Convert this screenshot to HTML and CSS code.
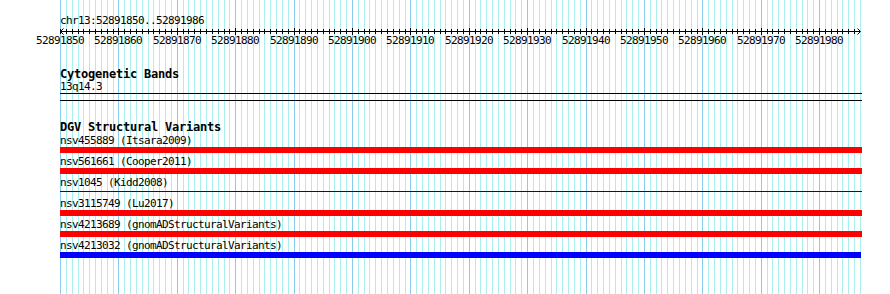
FILE: index.html
```html
<!DOCTYPE html>
<html>
<head>
<meta charset="utf-8">
<title>Genome view</title>
<link rel="stylesheet" href="styles.css">
</head>
<body>
<div class="view">
  <svg class="grid" width="890" height="294" viewBox="0 0 890 294">
    <path class="grid-minor" d="M66.5 0v294M72.5 0v294M78.5 0v294M83.5 0v294M89.5 0v294M95.5 0v294M101.5 0v294M107.5 0v294M113.5 0v294M124.5 0v294M130.5 0v294M136.5 0v294M142.5 0v294M148.5 0v294M153.5 0v294M159.5 0v294M165.5 0v294M171.5 0v294M183.5 0v294M188.5 0v294M194.5 0v294M200.5 0v294M206.5 0v294M212.5 0v294M218.5 0v294M224.5 0v294M229.5 0v294M241.5 0v294M247.5 0v294M253.5 0v294M259.5 0v294M264.5 0v294M270.5 0v294M276.5 0v294M282.5 0v294M288.5 0v294M299.5 0v294M305.5 0v294M311.5 0v294M317.5 0v294M323.5 0v294M329.5 0v294M334.5 0v294M340.5 0v294M346.5 0v294M358.5 0v294M364.5 0v294M369.5 0v294M375.5 0v294M381.5 0v294M387.5 0v294M393.5 0v294M399.5 0v294M405.5 0v294M416.5 0v294M422.5 0v294M428.5 0v294M434.5 0v294M440.5 0v294M445.5 0v294M451.5 0v294M457.5 0v294M463.5 0v294M475.5 0v294M480.5 0v294M486.5 0v294M492.5 0v294M498.5 0v294M504.5 0v294M510.5 0v294M515.5 0v294M521.5 0v294M533.5 0v294M539.5 0v294M545.5 0v294M551.5 0v294M556.5 0v294M562.5 0v294M568.5 0v294M574.5 0v294M580.5 0v294M591.5 0v294M597.5 0v294M603.5 0v294M609.5 0v294M615.5 0v294M621.5 0v294M626.5 0v294M632.5 0v294M638.5 0v294M650.5 0v294M656.5 0v294M661.5 0v294M667.5 0v294M673.5 0v294M679.5 0v294M685.5 0v294M691.5 0v294M697.5 0v294M708.5 0v294M714.5 0v294M720.5 0v294M726.5 0v294M732.5 0v294M737.5 0v294M743.5 0v294M749.5 0v294M755.5 0v294M767.5 0v294M772.5 0v294M778.5 0v294M784.5 0v294M790.5 0v294M796.5 0v294M802.5 0v294M807.5 0v294M813.5 0v294M825.5 0v294M831.5 0v294M837.5 0v294M842.5 0v294M848.5 0v294M854.5 0v294M860.5 0v294"/>
    <path class="grid-major" d="M60.5 0v294M118.5 0v294M177.5 0v294M235.5 0v294M294.5 0v294M352.5 0v294M410.5 0v294M469.5 0v294M527.5 0v294M586.5 0v294M644.5 0v294M702.5 0v294M761.5 0v294M819.5 0v294"/>
  </svg>

  <div class="location">chr13:52891850..52891986</div>

  <svg class="ruler" width="890" height="21" viewBox="0 0 890 21">
    <path class="ruler-line" d="M60 4.5H860"/>
    <path class="ruler-line" d="M60.5 2v5M66.5 2v5M72.5 2v5M78.5 2v5M83.5 2v5M89.5 2v5M95.5 2v5M101.5 2v5M107.5 2v5M113.5 2v5M118.5 1v7M124.5 2v5M130.5 2v5M136.5 2v5M142.5 2v5M148.5 2v5M153.5 2v5M159.5 2v5M165.5 2v5M171.5 2v5M177.5 1v7M183.5 2v5M188.5 2v5M194.5 2v5M200.5 2v5M206.5 2v5M212.5 2v5M218.5 2v5M224.5 2v5M229.5 2v5M235.5 1v7M241.5 2v5M247.5 2v5M253.5 2v5M259.5 2v5M264.5 2v5M270.5 2v5M276.5 2v5M282.5 2v5M288.5 2v5M294.5 1v7M299.5 2v5M305.5 2v5M311.5 2v5M317.5 2v5M323.5 2v5M329.5 2v5M334.5 2v5M340.5 2v5M346.5 2v5M352.5 1v7M358.5 2v5M364.5 2v5M369.5 2v5M375.5 2v5M381.5 2v5M387.5 2v5M393.5 2v5M399.5 2v5M405.5 2v5M410.5 1v7M416.5 2v5M422.5 2v5M428.5 2v5M434.5 2v5M440.5 2v5M445.5 2v5M451.5 2v5M457.5 2v5M463.5 2v5M469.5 1v7M475.5 2v5M480.5 2v5M486.5 2v5M492.5 2v5M498.5 2v5M504.5 2v5M510.5 2v5M515.5 2v5M521.5 2v5M527.5 1v7M533.5 2v5M539.5 2v5M545.5 2v5M551.5 2v5M556.5 2v5M562.5 2v5M568.5 2v5M574.5 2v5M580.5 2v5M586.5 1v7M591.5 2v5M597.5 2v5M603.5 2v5M609.5 2v5M615.5 2v5M621.5 2v5M626.5 2v5M632.5 2v5M638.5 2v5M644.5 1v7M650.5 2v5M656.5 2v5M661.5 2v5M667.5 2v5M673.5 2v5M679.5 2v5M685.5 2v5M691.5 2v5M697.5 2v5M702.5 1v7M708.5 2v5M714.5 2v5M720.5 2v5M726.5 2v5M732.5 2v5M737.5 2v5M743.5 2v5M749.5 2v5M755.5 2v5M761.5 1v7M767.5 2v5M772.5 2v5M778.5 2v5M784.5 2v5M790.5 2v5M796.5 2v5M802.5 2v5M807.5 2v5M813.5 2v5M819.5 1v7M825.5 2v5M831.5 2v5M837.5 2v5M842.5 2v5M848.5 2v5M854.5 2v5"/>
    <path class="ruler-arrow" d="M63.5 1.5L60.5 4.5L63.5 7.5M857.5 1.5L860.5 4.5L857.5 7.5"/>
    <g class="ruler-labels">
      <text x="60" y="17">52891850</text>
      <text x="118" y="17">52891860</text>
      <text x="177" y="17">52891870</text>
      <text x="235" y="17">52891880</text>
      <text x="294" y="17">52891890</text>
      <text x="352" y="17">52891900</text>
      <text x="410" y="17">52891910</text>
      <text x="469" y="17">52891920</text>
      <text x="527" y="17">52891930</text>
      <text x="586" y="17">52891940</text>
      <text x="644" y="17">52891950</text>
      <text x="702" y="17">52891960</text>
      <text x="761" y="17">52891970</text>
      <text x="819" y="17">52891980</text>
    </g>
  </svg>

  <section class="track track-cyto">
    <div class="track-title">Cytogenetic Bands</div>
    <div class="feature-label label-tight">13q14.3</div>
    <div class="band"></div>
  </section>

  <section class="track track-dgv">
    <div class="track-title">DGV Structural Variants</div>
    <div class="features">
      <div class="feature">
        <div class="feature-label">nsv455889 (Itsara2009)</div>
        <div class="feature-bar bar-red"></div>
      </div>
      <div class="feature">
        <div class="feature-label">nsv561661 (Cooper2011)</div>
        <div class="feature-bar bar-red"></div>
      </div>
      <div class="feature">
        <div class="feature-label">nsv1045 (Kidd2008)</div>
        <div class="feature-bar bar-thin"></div>
      </div>
      <div class="feature">
        <div class="feature-label">nsv3115749 (Lu2017)</div>
        <div class="feature-bar bar-red"></div>
      </div>
      <div class="feature">
        <div class="feature-label">nsv4213689 (gnomADStructuralVariants)</div>
        <div class="feature-bar bar-red"></div>
      </div>
      <div class="feature">
        <div class="feature-label">nsv4213032 (gnomADStructuralVariants)</div>
        <div class="feature-bar bar-blue"></div>
      </div>
    </div>
  </section>
</div>
</body>
</html>
```

FILE: styles.css
```css
html, body {
  margin: 0;
  padding: 0;
  background: #ffffff;
}

body {
  font-family: "DejaVu Sans Mono", "Liberation Mono", monospace;
  font-size: 11px;
  letter-spacing: -0.62px;
  color: #000000;
}

.view {
  position: relative;
  width: 890px;
  height: 294px;
  overflow: hidden;
}

.grid {
  position: absolute;
  left: 0;
  top: 0;
  z-index: 0;
}

.grid-minor {
  stroke: #aaeeee;
  stroke-width: 1;
  fill: none;
}

.grid-major {
  stroke: #88ccee;
  stroke-width: 1;
  fill: none;
}

.location,
.ruler,
.track {
  position: relative;
  z-index: 1;
}

.location {
  padding: 15px 0 0 60px;
  height: 12px;
  line-height: 12px;
  white-space: nowrap;
}

.ruler {
  display: block;
}

.ruler-line {
  stroke: #000000;
  stroke-width: 1;
  fill: none;
  shape-rendering: crispEdges;
}

.ruler-arrow {
  stroke: #000000;
  stroke-width: 1;
  fill: none;
}

.ruler-labels text {
  font-family: "DejaVu Sans Mono", "Liberation Mono", monospace;
  font-size: 11px;
  letter-spacing: -0.62px;
  text-anchor: middle;
  fill: #000000;
}

.track {
  margin-left: 60px;
  width: 802px;
}

.track-cyto {
  margin-top: 20px;
}

.track-dgv {
  margin-top: 20px;
}

.track-title {
  font-weight: bold;
  font-size: 12px;
  letter-spacing: -0.22px;
  line-height: 13px;
  height: 13px;
  white-space: nowrap;
}

.feature-label {
  height: 12px;
  line-height: 12px;
  white-space: nowrap;
}

.label-tight {
  height: 11px;
  line-height: 11px;
}

.band {
  margin-top: 1px;
  height: 6px;
  border-top: 1px solid #000000;
  border-bottom: 1px solid #000000;
}

.features {
  margin-top: 1px;
  display: flex;
  flex-direction: column;
  gap: 3px;
}

.feature-bar {
  height: 6px;
}

.bar-red {
  background: #ff0000;
}

.bar-blue {
  background: #0000ff;
  width: 801px;
}

.bar-thin {
  box-sizing: border-box;
  border-top: 1px solid #0000cc;
  margin-top: 2px;
  height: 4px;
}
```
